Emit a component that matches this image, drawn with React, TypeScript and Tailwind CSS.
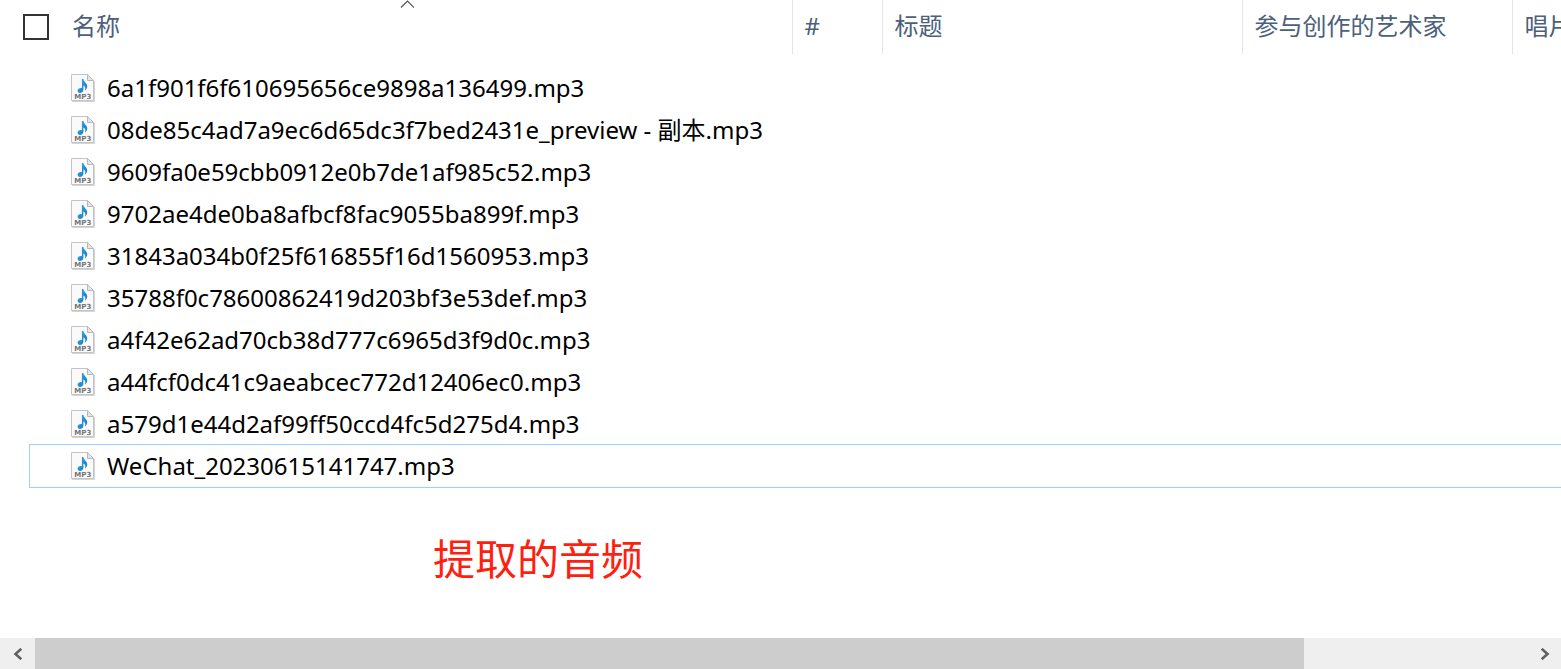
import React from 'react';

const files = [
  '6a1f901f6f610695656ce9898a136499.mp3',
  '08de85c4ad7a9ec6d65dc3f7bed2431e_preview - 副本.mp3',
  '9609fa0e59cbb0912e0b7de1af985c52.mp3',
  '9702ae4de0ba8afbcf8fac9055ba899f.mp3',
  '31843a034b0f25f616855f16d1560953.mp3',
  '35788f0c78600862419d203bf3e53def.mp3',
  'a4f42e62ad70cb38d777c6965d3f9d0c.mp3',
  'a44fcf0dc41c9aeabcec772d12406ec0.mp3',
  'a579d1e44d2af99ff50ccd4fc5d275d4.mp3',
  'WeChat_20230615141747.mp3',
];

const columns = ['#', '标题', '参与创作的艺术家', '唱片'];

function Mp3Icon() {
  return (
    <svg width="24" height="28" viewBox="0 0 24 28" aria-hidden="true" className="shrink-0">
      <defs>
        <linearGradient id="note" x1="0" y1="0" x2="1" y2="1">
          <stop offset="0" stopColor="#35aef0" />
          <stop offset="1" stopColor="#1674b8" />
        </linearGradient>
      </defs>
      <path d="M1 27.5H23.5V7" fill="none" stroke="#d4d4d4" />
      <path d="M.5 .5H16.5L22.5 6.5V26.5H.5Z" fill="#fafafa" stroke="#c4c4c4" />
      <path d="M16.5 .5V6.5H22.5Z" fill="#e6e6e6" stroke="#b8b8b8" />
      <path
        d="M10.9 5H12.4C12.6 8.2 16.6 9 16.2 12.8C16 14.6 15 15.8 13.8 16.8C14.6 14.6 14.8 12.4 12.4 11.4V15.6C12.4 17.8 10.8 19 9 19C7.4 19 6.6 18 6.6 16.8C6.6 14.9 8.7 13.8 10.9 14.2Z"
        fill="url(#note)"
      />
      <text
        x="11.8"
        y="25"
        textAnchor="middle"
        fontSize="7"
        fontWeight="700"
        fill="#747474"
        fontFamily="DejaVu Sans, sans-serif"
      >
        MP3
      </text>
    </svg>
  );
}

export default function App() {
  return (
    <div className="flex min-h-screen flex-col overflow-hidden bg-white font-['Noto_Sans','Noto_Sans_CJK_SC',sans-serif] text-2xl text-black">
      <div className="overflow-hidden pb-1">
        <table className="ml-[30px] w-full table-fixed border-collapse">
          <colgroup>
            <col className="w-[762px]" />
            <col className="w-[90px]" />
            <col className="w-[360px]" />
            <col className="w-[270px]" />
            <col />
          </colgroup>
          <thead>
            <tr className="h-[54px] text-left text-[#4c607a]">
              <th aria-sort="ascending" className="relative p-0 font-normal">
                <div className="-ml-[7px] flex items-center gap-[23px]">
                  <input
                    type="checkbox"
                    aria-label="全选"
                    className="size-[26px] shrink-0 appearance-none border-2 border-[#333333] bg-white checked:bg-[#333333]"
                  />
                  <button type="button" className="flex-1 pb-0.5 text-left">
                    名称
                  </button>
                </div>
                <svg
                  width="14"
                  height="9"
                  viewBox="0 0 14 9"
                  aria-hidden="true"
                  className="absolute top-0 left-[370px]"
                >
                  <path d="M1 7.5L7.5 1L14 7.5" fill="none" stroke="#555555" strokeWidth="1.2" />
                </svg>
              </th>
              {columns.map((name) => (
                <th key={name} className="overflow-hidden border-l border-[#e5e5e5] p-0 font-normal">
                  <button type="button" className="w-full pb-0.5 pl-3 text-left whitespace-nowrap">
                    {name}
                  </button>
                </th>
              ))}
            </tr>
          </thead>
          <tbody>
            <tr aria-hidden="true" className="h-[13px]">
              <td colSpan={5} className="p-0" />
            </tr>
            {files.map((file, i) => (
              <tr
                key={file}
                className={
                  i === files.length - 1
                    ? 'h-[42px] outline outline-1 outline-[#99d1ff]'
                    : 'h-[42px]'
                }
              >
                <td className="p-0 pl-[41px]">
                  <div className="flex items-center gap-3 leading-9 whitespace-nowrap">
                    <Mp3Icon />
                    <span>{file}</span>
                  </div>
                </td>
                <td colSpan={4} className="p-0" />
              </tr>
            ))}
          </tbody>
        </table>
      </div>

      <p className="mt-[34px] pl-[433px] font-['Noto_Sans_CJK_SC',sans-serif] text-[42px] leading-[64px] text-[#ff1f10]">
        提取的音频
      </p>

      <div className="mt-auto flex h-[31px] bg-[#efefef] text-[#606060]">
        <button type="button" aria-label="向左滚动" className="flex w-[35px] items-center justify-center">
          <svg width="10" height="12" viewBox="0 0 10 12" aria-hidden="true">
            <path d="M8.3 .8L2.5 6L8.3 11.2" fill="none" stroke="currentColor" strokeWidth="2.6" />
          </svg>
        </button>
        <div className="flex-1">
          <div className="h-full w-[85%] bg-[#cdcdcd]" />
        </div>
        <button type="button" aria-label="向右滚动" className="flex w-[33px] items-center justify-center">
          <svg width="10" height="12" viewBox="0 0 10 12" aria-hidden="true">
            <path d="M1.7 .8L7.5 6L1.7 11.2" fill="none" stroke="currentColor" strokeWidth="2.6" />
          </svg>
        </button>
      </div>
    </div>
  );
}
